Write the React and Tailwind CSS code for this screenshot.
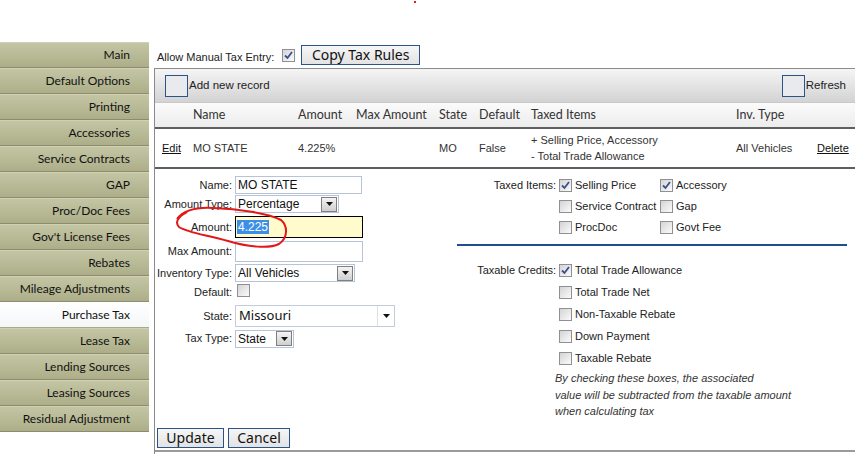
import React from 'react';

const NAV = [
  'Main',
  'Default Options',
  'Printing',
  'Accessories',
  'Service Contracts',
  'GAP',
  'Proc/Doc Fees',
  "Gov't License Fees",
  'Rebates',
  'Mileage Adjustments',
  'Purchase Tax',
  'Lease Tax',
  'Lending Sources',
  'Leasing Sources',
  'Residual Adjustment',
];

const segoe = { fontFamily: '"Noto Sans", "Open Sans", sans-serif' };
const lato = { fontFamily: 'Lato, "Noto Sans", sans-serif' };

function Check({ checked }) {
  return (
    <span className="inline-flex h-[13px] w-[13px] shrink-0 items-center justify-center border border-[#8f9094] bg-gradient-to-br from-[#d4d4d4] to-[#fbfbfb]">
      {checked && (
        <svg width="9" height="9" viewBox="0 0 9 9">
          <path d="M1 4.5 L3.5 7 L8 1" fill="none" stroke="#3b4f8c" strokeWidth="1.8" />
        </svg>
      )}
    </span>
  );
}

function Arrow() {
  return (
    <svg width="7" height="4" viewBox="0 0 7 4">
      <path d="M0 0 L7 0 L3.5 4 Z" fill="#111" />
    </svg>
  );
}

function Select({ value, width }) {
  return (
    <div className={`flex h-[18px] items-center justify-between border border-[#b7c3d6] bg-white pl-[2px] pr-[1px] ${width}`}>
      <span className="text-[12px] leading-none text-[#111]">{value}</span>
      <span className="flex h-[15px] w-[16px] items-center justify-center border border-[#7f7f7f] bg-gradient-to-b from-[#f4f4f4] to-[#cfcfcf]">
        <Arrow />
      </span>
    </div>
  );
}

function CheckRow({ label, checked, className = '' }) {
  return (
    <div className={`flex h-[14px] items-center gap-[3px] leading-[14px] ${className}`}>
      <Check checked={checked} />
      <span>{label}</span>
    </div>
  );
}

export default function App() {
  return (
    <div className="relative h-[454px] w-[855px] overflow-hidden bg-white text-[11px] text-[#222]" style={{ fontFamily: '"Liberation Sans", Arial, sans-serif' }}>
      {/* tiny red mark at the top */}
      <span className="absolute left-[414px] top-[1px] h-[2px] w-[2px] bg-[#e02020]" />

      <div className="flex">
        {/* sidebar */}
        <aside className="mt-[42px] w-[149px] shrink-0" style={lato}>
          {NAV.map((item) => (
            <div
              key={item}
              className={
                item === 'Purchase Tax'
                  ? 'flex h-[26px] items-center justify-end border-b border-[#a9aa88] bg-gradient-to-b from-[#ffffff] to-[#f4f6f8] pr-[19px] text-[12px] text-[#111]'
                  : 'flex h-[26px] items-center justify-end border-b border-t border-b-[#8c8d6d] border-t-[#cfd0b4] bg-gradient-to-b from-[#c4c5a3] to-[#adae89] pr-[19px] text-[12px] text-[#111]'
              }
            >
              {item}
            </div>
          ))}
        </aside>

        {/* main area */}
        <main className="ml-[5px] mt-[45px] flex-1">
          <div className="flex h-[23px] items-start pl-[3px]">
            <span className="mt-[4px]">Allow Manual Tax Entry:</span>
            <span className="ml-[8px] mt-[3px]">
              <Check checked />
            </span>
            <button
              className="ml-[6px] h-[20px] w-[119px] border border-[#2a5488] bg-gradient-to-b from-[#f6f6f6] to-[#e3e3e3] text-[14px] leading-none text-[#111]"
              style={segoe}
            >
              Copy Tax Rules
            </button>
          </div>

          <div className="h-[386px] border-l border-[#8a8a8a]">
            {/* toolbar */}
            <div className="flex h-[34px] items-center border-t border-[#8c8c8c] bg-gradient-to-b from-[#f5f5f5] to-[#d3d3d3] pl-[10px] pr-[9px] text-[11.5px]">
              <span className="h-[22px] w-[23px] border border-[#2a5488] bg-[#e8eaee]" />
              <span className="ml-px">Add new record</span>
              <span className="ml-auto h-[22px] w-[23px] border border-[#2a5488] bg-[#e8eaee]" />
              <span className="ml-px">Refresh</span>
            </div>

            {/* header row */}
            <div
              className="grid h-[27px] grid-cols-[38px_105px_58px_83px_40px_52px_205px_81px_38px] items-center border-b-2 border-t border-b-[#5f5f5f] border-t-[#c9c9c9] bg-gradient-to-b from-[#fbfbfb] to-[#ececec] pt-px text-[12.5px] text-[#333]"
              style={lato}
            >
              <span />
              <span>Name</span>
              <span>Amount</span>
              <span>Max Amount</span>
              <span>State</span>
              <span>Default</span>
              <span>Taxed Items</span>
              <span>Inv. Type</span>
              <span />
            </div>

            {/* data row */}
            <div className="grid h-[40px] grid-cols-[38px_105px_58px_83px_40px_52px_205px_81px_38px] items-center border-b-2 border-[#5f5f5f] text-[11px] text-[#333]">
              <span className="pl-[7px] text-[#111] underline">Edit</span>
              <span>MO STATE</span>
              <span>4.225%</span>
              <span />
              <span>MO</span>
              <span>False</span>
              <span className="leading-[16px]">
                + Selling Price, Accessory
                <br />- Total Trade Allowance
              </span>
              <span>All Vehicles</span>
              <span className="text-[#111] underline">Delete</span>
            </div>

            {/* edit form */}
            <div className="relative flex h-[259px]">
              <div className="w-[302px] pt-[7px]">
                <div className="flex h-[18px] items-center">
                  <span className="w-[77px] text-right">Name:</span>
                  <span className="ml-[3px] flex h-[18px] w-[127px] items-center border border-[#b7c3d6] pl-[2px] text-[12px] text-[#111]">MO STATE</span>
                </div>
                <div className="mt-px flex h-[18px] items-center">
                  <span className="w-[77px] text-right">Amount Type:</span>
                  <span className="ml-[3px]">
                    <Select value="Percentage" width="w-[104px]" />
                  </span>
                </div>
                <div className="mt-[3px] flex h-[22px] items-center">
                  <span className="w-[77px] text-right">Amount:</span>
                  <span className="ml-[3px] flex h-[22px] w-[128px] items-center border border-black bg-[#fffbcc] pl-px">
                    <span className="bg-[#3c8fe6] px-px text-[12px] leading-[14px] text-white">4.225</span>
                  </span>
                </div>
                <div className="mt-[3px] flex h-[21px] items-center">
                  <span className="w-[77px] text-right">Max Amount:</span>
                  <span className="ml-[3px] h-[21px] w-[128px] border border-[#b7c3d6]" />
                </div>
                <div className="mt-[2px] flex h-[18px] items-center">
                  <span className="w-[77px] whitespace-nowrap text-right">Inventory Type:</span>
                  <span className="ml-[3px]">
                    <Select value="All Vehicles" width="w-[120px]" />
                  </span>
                </div>
                <div className="mt-[2px] flex h-[17px] items-center">
                  <span className="w-[77px] text-right">Default:</span>
                  <span className="ml-[5px]">
                    <Check />
                  </span>
                </div>
                <div className="mt-[4px] flex h-[22px] items-center">
                  <span className="w-[77px] text-right">State:</span>
                  <span className="ml-[3px] flex h-[22px] w-[160px] items-center border border-[#c3cdda] bg-white text-[13px] text-[#111]" style={segoe}>
                    <span className="flex-1 pl-[3px]">Missouri</span>
                    <span className="flex h-full w-[17px] items-center justify-center border-l border-[#dde2e8]">
                      <Arrow />
                    </span>
                  </span>
                </div>
                <div className="mt-[3px] flex h-[17px] items-center">
                  <span className="w-[77px] text-right">Tax Type:</span>
                  <span className="ml-[3px]">
                    <Select value="State" width="w-[59px]" />
                  </span>
                </div>
              </div>

              <div className="w-[394px] pt-[9px] text-[11px]">
                <div className="flex">
                  <span className="w-[102px] pr-[3px] text-right leading-[14px]">Taxed Items:</span>
                  <div className="flex flex-col gap-[7px]">
                    <div className="flex">
                      <CheckRow label="Selling Price" checked className="w-[101px]" />
                      <CheckRow label="Accessory" checked />
                    </div>
                    <div className="flex">
                      <CheckRow label="Service Contract" className="w-[101px]" />
                      <CheckRow label="Gap" />
                    </div>
                    <div className="flex">
                      <CheckRow label="ProcDoc" className="w-[101px]" />
                      <CheckRow label="Govt Fee" />
                    </div>
                  </div>
                </div>

                <div className="mr-[4px] mt-[10px] h-[2px] bg-[#1f4f8e]" />

                <div className="mt-[17px] flex">
                  <span className="w-[102px] pr-[3px] text-right leading-[14px]">Taxable Credits:</span>
                  <div className="flex flex-col gap-[8px]">
                    <CheckRow label="Total Trade Allowance" checked />
                    <CheckRow label="Total Trade Net" />
                    <CheckRow label="Non-Taxable Rebate" />
                    <CheckRow label="Down Payment" />
                    <CheckRow label="Taxable Rebate" />
                  </div>
                </div>
                <p className="ml-[98px] mt-[5px] italic leading-[16.5px] text-[#333]">
                  By checking these boxes, the associated
                  <br />
                  value will be subtracted from the taxable amount
                  <br />
                  when calculating tax
                </p>
              </div>

              {/* red annotation circle */}
              <svg className="pointer-events-none absolute left-[18px] top-[36px]" width="118" height="46" viewBox="0 0 118 46">
                <path
                  d="M4 14 C10 6 22 2 40 3 C65 4 95 8 108 15 C115 21 115 33 106 39 C96 44 75 42 55 36 C35 30 15 28 6 22 C2 18 4 12 14 7"
                  fill="none"
                  stroke="#e21818"
                  strokeWidth="2"
                />
              </svg>
            </div>

            {/* buttons */}
            <div className="flex gap-[4px] pl-[2px]" style={segoe}>
              <button className="h-[20px] w-[67px] border border-[#2a5488] bg-gradient-to-b from-[#f6f6f6] to-[#e3e3e3] text-[14px] leading-none text-[#111]">Update</button>
              <button className="h-[20px] w-[62px] border border-[#2a5488] bg-gradient-to-b from-[#f6f6f6] to-[#e3e3e3] text-[14px] leading-none text-[#111]">Cancel</button>
            </div>
            <div className="mt-[2px] h-[2px] bg-[#9a9a9a]" />
          </div>
        </main>
      </div>
    </div>
  );
}
